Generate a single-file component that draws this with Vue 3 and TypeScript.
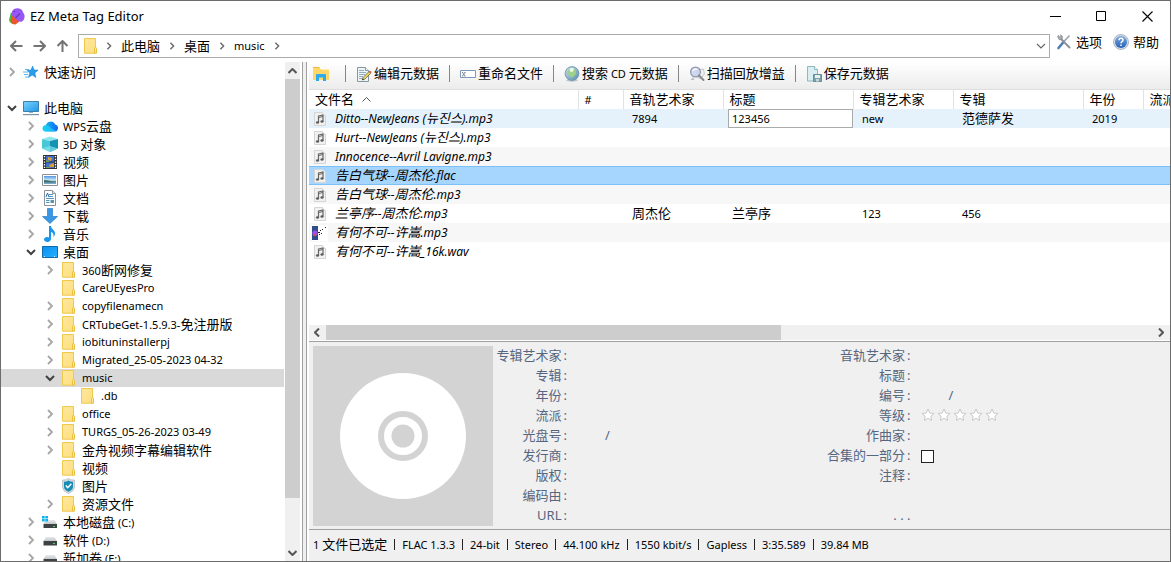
<script setup lang="ts">
import { h, ref } from 'vue'

/* Splits mixed text into CJK and Latin runs, so that each script gets its own size. */
const Txt = (props: { t: string }) => {
  const runs = props.t.match(/[\u3000-\u9fff\uac00-\ud7af]+|[^\u3000-\u9fff\uac00-\ud7af]+/g) ?? []
  return h(
    'span',
    { class: 'txt' },
    runs.map((r) => h('span', { class: /[\u3000-\ud7af]/.test(r) ? 'cjk' : 'latin' }, r)),
  )
}
Txt.props = ['t']

type Node = { name: string; level: number; icon: string; state: 'open' | 'closed' | 'leaf' | 'blank' }
const n = (level: number, icon: string, name: string, state: Node['state'] = 'closed'): Node => ({ name, level, icon, state })

const tree: Node[] = [
  n(0, 'star', '快速访问'),
  n(0, '', '', 'blank'),
  n(0, 'pc', '此电脑', 'open'),
  n(1, 'cloud', 'WPS云盘'),
  n(1, 'cube', '3D 对象'),
  n(1, 'film', '视频'),
  n(1, 'photo', '图片'),
  n(1, 'doc', '文档'),
  n(1, 'down', '下载'),
  n(1, 'note', '音乐'),
  n(1, 'desktop', '桌面', 'open'),
  n(2, 'folder', '360断网修复'),
  n(2, 'folder', 'CareUEyesPro', 'leaf'),
  n(2, 'folder', 'copyfilenamecn'),
  n(2, 'folder', 'CRTubeGet-1.5.9.3-免注册版'),
  n(2, 'folder', 'iobituninstallerpj'),
  n(2, 'folder', 'Migrated_25-05-2023 04-32'),
  n(2, 'folder', 'music', 'open'),
  n(3, 'folder', '.db', 'leaf'),
  n(2, 'folder', 'office'),
  n(2, 'folder', 'TURGS_05-26-2023 03-49'),
  n(2, 'folder', '金舟视频字幕编辑软件'),
  n(2, 'folder', '视频', 'leaf'),
  n(2, 'shield', '图片', 'leaf'),
  n(2, 'folder', '资源文件'),
  n(1, 'cdrive', '本地磁盘 (C:)'),
  n(1, 'drive', '软件 (D:)'),
  n(1, 'drive', '新加卷 (E:)'),
]

const crumbs = ['此电脑', '桌面', 'music']
const tools = [
  { icon: 'edit', label: '编辑元数据' },
  { icon: 'rename', label: '重命名文件' },
  { icon: 'globe', label: '搜索 CD 元数据' },
  { icon: 'scan', label: '扫描回放增益' },
  { icon: 'save', label: '保存元数据' },
]
const columns = ['文件名', '#', '音轨艺术家', '标题', '专辑艺术家', '专辑', '年份', '流派']
const files = [
  { name: 'Ditto--NewJeans (뉴진스).mp3', cells: ['', '7894', '', 'new', '范德萨发', '2019', ''] },
  { name: 'Hurt--NewJeans (뉴진스).mp3', cells: ['', '', '', '', '', '', ''] },
  { name: 'Innocence--Avril Lavigne.mp3', cells: ['', '', '', '', '', '', ''] },
  { name: '告白气球--周杰伦.flac', cells: ['', '', '', '', '', '', ''] },
  { name: '告白气球--周杰伦.mp3', cells: ['', '', '', '', '', '', ''] },
  { name: '兰亭序--周杰伦.mp3', cells: ['', '周杰伦', '兰亭序', '123', '456', '', ''] },
  { name: '有何不可--许嵩.mp3', cells: ['', '', '', '', '', '', ''] },
  { name: '有何不可--许嵩_16k.wav', cells: ['', '', '', '', '', '', ''] },
]
const title = ref('123456')

const fields = [
  { left: '专辑艺术家', lk: 'text', right: '音轨艺术家', rk: 'text' },
  { left: '专辑', lk: 'text', right: '标题', rk: 'text' },
  { left: '年份', lk: 'text', right: '编号', rk: 'pair' },
  { left: '流派', lk: 'text', right: '等级', rk: 'stars' },
  { left: '光盘号', lk: 'pair', right: '作曲家', rk: 'text' },
  { left: '发行商', lk: 'text', right: '合集的一部分', rk: 'check' },
  { left: '版权', lk: 'text', right: '注释', rk: 'text' },
  { left: '编码由', lk: 'text', right: '', rk: '' },
  { left: 'URL', lk: 'url', right: '', rk: '' },
]
const status = ['1 文件已选定', 'FLAC 1.3.3', '24-bit', 'Stereo', '44.100 kHz', '1550 kbit/s', 'Gapless', '3:35.589', '39.84 MB']
</script>

<template>
  <div class="window">
    <svg class="defs" width="0" height="0" aria-hidden="true">
      <defs>
        <linearGradient id="gFolder" x1="0" y1="0" x2="1" y2="1"><stop offset="0" stop-color="#ffe79d" /><stop offset="1" stop-color="#fddf80" /></linearGradient>
        <linearGradient id="gPc" x1="0" y1="0" x2="1" y2="1"><stop offset="0" stop-color="#7fd3ff" /><stop offset="1" stop-color="#1c97e8" /></linearGradient>
        <linearGradient id="gDesk" x1="0" y1="0" x2="1" y2="1"><stop offset="0" stop-color="#0c8ef0" /><stop offset="1" stop-color="#22b2ff" /></linearGradient>
        <linearGradient id="gCloud" x1="0" y1="0" x2="1" y2="0"><stop offset="0" stop-color="#12c8f4" /><stop offset="1" stop-color="#1464f0" /></linearGradient>
        <linearGradient id="gSky" x1="0" y1="0" x2="0" y2="1"><stop offset="0" stop-color="#4f98e0" /><stop offset=".55" stop-color="#d8ecfb" /><stop offset=".6" stop-color="#4d8578" /><stop offset="1" stop-color="#7fa6c8" /></linearGradient>
        <linearGradient id="gHelp" x1="0" y1="0" x2="0" y2="1"><stop offset="0" stop-color="#7ba9e0" /><stop offset="1" stop-color="#2560b8" /></linearGradient>
        <linearGradient id="gGlobe" x1="0" y1="0" x2="1" y2="1"><stop offset="0" stop-color="#c4e2ee" /><stop offset="1" stop-color="#5b8cab" /></linearGradient>
        <linearGradient id="gDrive" x1="0" y1="0" x2="0" y2="1"><stop offset="0" stop-color="#e8e9ea" /><stop offset="1" stop-color="#c3c7ca" /></linearGradient>
        <symbol id="i-folder" viewBox="0 0 16 16"><path d="M1.500.5h11v14.700h-11z" fill="url(#gFolder)" stroke="#efc94c" /><path d="M11.500 10.500q0-1 1-1t1 1v4.700h-2z" fill="#ffe9a6" stroke="#e9bf3f" /></symbol>
        <symbol id="i-star" viewBox="0 0 16 16"><path d="M9.600 2l1.600 4 4 .1-3.300 2.800 1 4.600-3.700-2.400-3.800 2.400 1.300-4.500-2.800-2.700 4-.2z" fill="#2a9dea" stroke="#1583cf" stroke-width=".5" /><path d="M2 5.500h4M0 8h5M1 10.500h4M2 13h3" stroke="#55b6f2" /></symbol>
        <symbol id="i-pc" viewBox="0 0 16 16"><path d="M.5 1.500h15v10H.5z" fill="url(#gPc)" stroke="#3a81ad" /><path d="M6 12h4v1H6z" fill="#8cb5cf" /><path d="M0 14h16v1.200H0z" fill="#7a94a6" /></symbol>
        <symbol id="i-cloud" viewBox="0 0 16 16"><path d="M4 13.500a3 3 0 01-.2-6.200 5 5 0 019.400-.7 3.500 3.500 0 01-.2 6.900z" fill="url(#gCloud)" /><path d="M3 7.500q3-1 5 1.500t6 4l-2 .5H4a3 3 0 01-1-6z" fill="#20d3f6" opacity=".7" /></symbol>
        <symbol id="i-cube" viewBox="0 0 16 16"><path d="M0 3l8-2.500L16 3 8 5z" fill="#8de6ee" /><path d="M0 3l8 2v11l-8-3.500z" fill="#49c7d6" /><path d="M16 3L8 5v11l8-3.500z" fill="#1593b3" /><path d="M0 12.500L8 10l8 2.500L8 16z" fill="#8ce8ef" opacity=".65" /></symbol>
        <symbol id="i-film" viewBox="0 0 16 16"><path d="M1 1h14v14H1z" fill="#303238" /><path d="M4 2h8v5.500H4zM4 8.500h8V14H4z" fill="#416fd0" /><path d="M6 3l4 1-1 3-3-1zM7 11l5-2v4H8z" fill="#d9a13a" /><path d="M4 6l3 1v1H4zM4 13h4v1H4z" fill="#76a04b" /><path d="M2.500 2v13M13.500 2v13" stroke="#fff" stroke-width="1.300" stroke-dasharray="1.300 1.400" /></symbol>
        <symbol id="i-photo" viewBox="0 0 16 16"><path d="M.5 2.500h15v11H.5z" fill="#fff" stroke="#8d9296" /><path d="M2 4h12v8H2z" fill="url(#gSky)" /><path d="M2 8q5 0 12 3v1H2z" fill="#3d746a" /><path d="M2 10.500h12V12H2z" fill="#7aa7cb" /></symbol>
        <symbol id="i-doc" viewBox="0 0 16 16"><path d="M2.500.5h8l3 3v12h-11z" fill="#fff" stroke="#8b9094" /><path d="M10.500.5v3h3" fill="#ddd" stroke="#9a9da0" /><path d="M7 4.500h4M7 6.500h4M4 8.500h8M4 10.500h3.500M4 12.500h3.500" stroke="#4b98c9" /><path d="M4 7l1.500-4L7 7" fill="none" stroke="#2b6fa8" /><path d="M8.500 10h3.500v3H8.500z" fill="#5f94a0" /></symbol>
        <symbol id="i-down" viewBox="0 0 16 16"><path d="M5.500.5h5v8h5L8 15.500.5 8.500h5z" fill="#3a97e6" stroke="#277cc4" stroke-width=".7" /></symbol>
        <symbol id="i-note" viewBox="0 0 16 16"><path d="M7 0h2c0 3 4 4 4 7.500 0 1.500-.6 2.500-1.500 3.500.6-3-.7-4.500-2.500-5v6.500c0 2-1.500 3.500-3.500 3.500S2 15 2 13.500C2 12 3.500 11 5 11q1 0 2 .4z" fill="#1696ee" /></symbol>
        <symbol id="i-desktop" viewBox="0 0 16 16"><path d="M.5 2.500h15v11H.5z" fill="url(#gDesk)" stroke="#0b6cae" /><path d="M2 12.500h2M12 12.500h2" stroke="#d6f0ff" stroke-dasharray="1 1" /></symbol>
        <symbol id="i-shield" viewBox="0 0 16 16"><path d="M7.500.5q-3 2-6 1.500v7q0 4 6 6.500 6-2.500 6-6.500V2q-3 .5-6-1.500z" fill="#d5dadd" stroke="#a8afb4" stroke-width=".6" /><path d="M7.500 2.500q-2 1.300-4.500 1.200v5q0 3 4.500 5 4.500-2 4.500-5v-5q-2.500.1-4.500-1.200z" fill="#168bb5" /><path d="M4.800 7.500l2 2.200 3.500-4" fill="none" stroke="#fff" stroke-width="1.500" /></symbol>
        <symbol id="i-drive" viewBox="0 0 16 16"><path d="M4 5h8.500l2.500 4H1.500z" fill="url(#gDrive)" /><path d="M1.500 9H15v4.500H1.500z" fill="#3d4245" /><path d="M11 11h2v1h-2z" fill="#38e052" /></symbol>
        <symbol id="i-cdrive" viewBox="0 0 16 16"><path d="M4 6h8.500l2.500 4H1.500z" fill="url(#gDrive)" /><path d="M1.500 10H15v4H1.500z" fill="#3d4245" /><path d="M11 12h2v1h-2z" fill="#38e052" /><path d="M0 2h2.700v2.500H0zM3.300 2H6v2.500H3.300zM0 5h2.700v2.500H0zM3.300 5H6v2.500H3.300z" fill="#0db4ec" /></symbol>
        <symbol id="i-edit" viewBox="0 0 16 16"><path d="M1.500 1.500h8l3 3v11h-11z" fill="#eef3f6" stroke="#8798a5" /><path d="M9.500 1.500v3h3" fill="#fff" stroke="#8798a5" /><path d="M3 4.500h5M3 6.500h7M3 8.500h6M3 10.500h4M3 12.500h3" stroke="#91aec3" /><path d="M7 11.500l6-6 1.800 1.700-6 6-2.500.8z" fill="#ead05e" stroke="#555a48" stroke-width=".7" /><path d="M13 5.500l1-1 1.700 1.800-1 1z" fill="#d45b57" /><path d="M6.300 14l.5-1.800 1.300 1.300z" fill="#333" /></symbol>
        <symbol id="i-rename" viewBox="0 0 16 16"><path d="M.5 4.500h15v7H.5z" fill="#fff" stroke="#7c99bd" /><path d="M2.500 6.500l2.500 3.500M5 6.500L2.500 10M2 6.500h1.200M4.300 6.500h1.200M2 10h1.200M4.300 10h1.200" stroke="#60666e" stroke-width=".7" fill="none" /></symbol>
        <symbol id="i-globe" viewBox="0 0 16 16"><ellipse cx="8" cy="14.300" rx="6" ry="1.400" fill="#bbc8cf" /><circle cx="8" cy="7.500" r="6.900" fill="url(#gGlobe)" stroke="#6a90a6" stroke-width=".8" /><path d="M5 3q4-1.500 6 .5l1 3.500-1.500 3-3 1.500L5 9.500 3.500 6.500z" fill="#9fd18c" /><path d="M5.500 3q2-1.500 4.500-.5l-1 3-2.500.5z" fill="#eef9ea" /></symbol>
        <symbol id="i-scan" viewBox="0 0 16 16"><path d="M9 3.500l5.500-.5 1 5-4 5-5-3z" fill="#eceef0" stroke="#b4b9be" stroke-width=".7" /><circle cx="6.500" cy="6" r="4.900" fill="#cbd3ed" fill-opacity=".9" stroke="#9098ae" stroke-width="1.200" /><path d="M3.500 5q2-2.500 5-1.500" stroke="#fff" stroke-width="1.200" fill="none" /><path d="M10 9.500l4.500 4.500" stroke="#85898f" stroke-width="2" stroke-linecap="round" /><path d="M4 11L1.500 14h4z" fill="#b9c0d0" /></symbol>
        <symbol id="i-save" viewBox="0 0 16 16"><path d="M1.500.5h7l3 3v11.500h-10z" fill="#d8eef1" stroke="#8fb8bd" /><path d="M8.500.5v3h3" fill="#f7ffff" stroke="#8fb8bd" /><path d="M7.500 8.500h8v7h-8z" fill="#7ba3aa" stroke="#648e97" /><path d="M9 9h5v3H9z" fill="#e6f0f2" /><path d="M10 13h3v2.500h-3z" fill="#c6d8dc" /></symbol>
        <symbol id="i-explorer" viewBox="0 0 16 16"><path d="M0 1h7v2h9v11H0z" fill="#ffd867" /><path d="M0 1h6v1H0z" fill="#f0b93c" /><path d="M8 3h8v1H8z" fill="#fff1b5" /><path d="M3 9q0-1 1-1h8q1 0 1 1v6h-3v-3.500H6V15H3z" fill="#2daaf0" /></symbol>
        <symbol id="i-mp" viewBox="0 0 16 16"><path d="M2.500 1.500h8l3 3v10h-11z" fill="#f1f1f1" stroke="#d5d5d5" /><path d="M10.500 1.500v3h3" fill="#fff" stroke="#ddd" /><path d="M6.500 5l4.500-1v6.500M6.500 4.500v7" fill="none" stroke="#666" stroke-width="1.200" /><path d="M6.500 6.500l4.500-1" stroke="#666" /><ellipse cx="5.500" cy="11.500" rx="1.600" ry="1.300" fill="#5c5c5c" /><ellipse cx="10" cy="10.500" rx="1.600" ry="1.300" fill="#5c5c5c" /></symbol>
        <symbol id="i-art" viewBox="0 0 16 16"><path d="M0 0h16v16H0z" fill="#fff" /><path d="M0 1h6v14H0z" fill="#304c8c" /><circle cx="3" cy="8" r="2.600" fill="#a24de8" /><path d="M1 9.500h3V11H1z" fill="#e0503a" /><path d="M6 7h2v1H6zM8 5h1v1H8zM9 8h1v1H9zM7 9h1v1H7zM13 2h1v1h-1zM10 4h1v1h-1z" fill="#222" /></symbol>
        <symbol id="i-tools" viewBox="0 0 16 16"><path d="M13.500 1.500L7 8.500" stroke="#9ba4ac" stroke-width="1.600" /><path d="M7.500 8L2.500 14" stroke="#4d7fb5" stroke-width="2.600" stroke-linecap="round" /><path d="M4 4l9.500 9.500" stroke="#8d9296" stroke-width="2" stroke-linecap="round" /><path d="M1.500 2.500l1-1.300 1 2L5 2.500 4.500.8l2 1.500-.3 3-3 .5z" fill="#a6abaf" stroke="#7d8388" stroke-width=".6" /></symbol>
        <symbol id="i-help" viewBox="0 0 16 16"><circle cx="8" cy="8" r="7.500" fill="#d5dae2" stroke="#9aa8bb" stroke-width=".8" /><circle cx="8" cy="8" r="6" fill="url(#gHelp)" /><path d="M6 6.300q0-2 2-2t2 1.700q0 1-1 1.600T8 9.300M8 10.500v1.600" fill="none" stroke="#fff" stroke-width="1.500" /></symbol>
        <symbol id="i-right" viewBox="0 0 10 10"><path d="M3 1l4 4-4 4" fill="none" stroke="currentColor" stroke-width="1.800" /></symbol>
        <symbol id="i-open" viewBox="0 0 10 10"><path d="M1 3l4 4 4-4" fill="none" stroke="currentColor" stroke-width="2" /></symbol>
      </defs>
    </svg>

    <header class="titlebar">
      <svg class="logo" width="16" height="17" viewBox="0 0 16 17">
        <path d="M2 4L0 12q1 4 5 4l3-2z" fill="#35c335" />
        <path d="M3 5L1.500 13q2 4 5 3.500L11 13z" fill="#f0542e" />
        <path d="M5 1q5-2 8 1l2.500 5q.5 5-2.500 6.500-3 1-5.500-2L2.500 7Q2 3 5 1z" fill="#9657f5" />
        <path d="M4.500 3.500H6M6.500 10L11 5.500" stroke="#6a35c0" stroke-width="1.200" />
      </svg>
      <h1>EZ Meta Tag Editor</h1>
      <div class="winbtns">
        <button type="button" aria-label="最小化"><svg width="11" height="11"><path d="M0 5.500h11" stroke="#000" /></svg></button>
        <button type="button" aria-label="最大化"><svg width="11" height="11"><path d="M.5.5h9v9h-9z" fill="none" stroke="#000" /></svg></button>
        <button type="button" aria-label="关闭"><svg width="11" height="11"><path d="M.5.5l10 10M10.500.5l-10 10" stroke="#000" stroke-width="1.100" /></svg></button>
      </div>
    </header>

    <nav class="navbar">
      <div class="arrows">
        <button type="button" aria-label="后退"><svg width="13" height="12" viewBox="0 0 13 12"><path d="M12.500 6H1.500M6 1L1 6l5 5" /></svg></button>
        <button type="button" aria-label="前进"><svg width="13" height="12" viewBox="0 0 13 12"><path d="M.5 6h11M7 1l5 5-5 5" /></svg></button>
        <button type="button" aria-label="向上"><svg width="13" height="12" viewBox="0 0 13 12"><path d="M6.500 12V1.500M1.500 6l5-5 5 5" /></svg></button>
      </div>
      <div class="address">
        <svg width="14" height="16" viewBox="0 0 14 16"><use href="#i-folder" width="16" height="16" /></svg>
        <svg class="sep" width="6" height="8" viewBox="1 0 6 8"><use href="#i-right" width="8" height="8" /></svg>
        <template v-for="c in crumbs" :key="c">
          <button type="button"><Txt :t="c" /></button>
          <svg class="sep" width="6" height="8" viewBox="1 0 6 8"><use href="#i-right" width="8" height="8" /></svg>
        </template>
        <button type="button" class="drop" aria-label="展开"><svg width="10" height="6" viewBox="0 0 10 6"><path d="M1 1l4 4 4-4" fill="none" stroke="#666" stroke-width="1.200" /></svg></button>
      </div>
      <button type="button" class="action"><svg width="16" height="16"><use href="#i-tools" /></svg><Txt t="选项" /></button>
      <button type="button" class="action"><svg width="16" height="16"><use href="#i-help" /></svg><Txt t="帮助" /></button>
    </nav>

    <div class="body">
      <aside class="sidebar">
        <ul class="tree">
          <li v-for="(item, i) in tree" :key="i">
            <button v-if="item.state !== 'blank'" type="button" class="node" :class="['level' + item.level, { selected: item.name === 'music' }]">
              <svg class="twist" :class="item.state" width="10" height="10"><use v-if="item.state !== 'leaf'" :href="item.state === 'open' ? '#i-open' : '#i-right'" /></svg>
              <svg class="icon" width="16" height="16"><use :href="'#i-' + item.icon" /></svg>
              <Txt :t="item.name" />
            </button>
          </li>
        </ul>
        <div class="vscroll">
          <svg width="9" height="6" viewBox="0 0 9 6"><path d="M.5 5l4-4 4 4" /></svg>
          <div class="vtrack"><div class="vthumb"></div></div>
          <svg width="9" height="6" viewBox="0 0 9 6"><path d="M.5 1l4 4 4-4" /></svg>
        </div>
      </aside>
      <div class="splitter"></div>

      <main class="content">
        <div class="toolbar">
          <button type="button" aria-label="打开文件夹"><svg width="16" height="16"><use href="#i-explorer" /></svg></button>
          <template v-for="t in tools" :key="t.icon">
            <i class="bar"></i>
            <button type="button"><svg width="16" height="16"><use :href="'#i-' + t.icon" /></svg><Txt :t="t.label" /></button>
          </template>
        </div>

        <div class="list">
          <table>
            <colgroup><col v-for="(c, i) in columns" :key="c" :class="'c' + i" /></colgroup>
            <thead>
              <tr>
                <th v-for="(c, i) in columns" :key="c" scope="col"><Txt :t="c" /><svg v-if="i === 0" class="sort" width="9" height="5" viewBox="0 0 9 5"><path d="M.5 4.500l4-4 4 4" fill="none" stroke="#555" /></svg></th>
              </tr>
            </thead>
            <tbody>
              <tr v-for="(f, r) in files" :key="f.name" :class="{ hot: r === 0, picked: r === 3 }">
                <td class="name"><div><svg width="16" height="16"><use :href="r === 6 ? '#i-art' : '#i-mp'" /></svg><Txt :t="f.name" /></div></td>
                <td v-for="(c, k) in f.cells" :key="k" :class="{ editing: r === 0 && k === 2 }">
                  <input v-if="r === 0 && k === 2" v-model="title" type="text" aria-label="标题" />
                  <Txt v-else :t="c" />
                </td>
              </tr>
            </tbody>
          </table>
        </div>
        <div class="hscroll">
          <svg width="6" height="9" viewBox="0 0 6 9"><path d="M5 .5l-4 4 4 4" /></svg>
          <div class="htrack"><div class="hthumb"></div></div>
          <svg width="6" height="9" viewBox="0 0 6 9"><path d="M1 .5l4 4-4 4" /></svg>
        </div>

        <section class="details">
          <svg class="cover" width="180" height="180" viewBox="0 0 180 180">
            <path d="M0 0h180v180H0z" fill="#d3d3d3" />
            <circle cx="90" cy="90" r="63" fill="#fff" />
            <circle cx="90" cy="90" r="22" fill="none" stroke="#d3d3d3" stroke-width="6" />
            <circle cx="90" cy="90" r="11.500" fill="#d3d3d3" />
          </svg>
          <form class="form" @submit.prevent>
            <div v-for="(f, i) in fields" :key="i" class="frow">
              <label :for="'l' + i">{{ f.left }}<span class="colon">:</span></label>
              <div class="value" :class="f.lk">
                <input :id="'l' + i" type="text" />
                <template v-if="f.lk === 'pair'"><span>/</span><input type="text" aria-label="光盘总数" /></template>
                <button v-if="f.lk === 'url'" type="button">. . .</button>
              </div>
              <template v-if="f.right">
                <label :for="'r' + i">{{ f.right }}<span class="colon">:</span></label>
                <div class="value" :class="f.rk">
                  <template v-if="f.rk === 'stars'">
                    <button v-for="s in 5" :id="s === 1 ? 'r' + i : undefined" :key="s" type="button" :aria-label="s + ' 星'">
                      <svg width="16" height="16" viewBox="0 0 16 16"><path d="M8 2l1.800 4 4.200.4-3.200 2.900.9 4.200L8 11.300l-3.700 2.200.9-4.200L2 6.400 6.200 6z" fill="#fff" stroke="#c6c9cc" stroke-linejoin="round" /></svg>
                    </button>
                  </template>
                  <input v-else-if="f.rk === 'check'" :id="'r' + i" type="checkbox" />
                  <template v-else>
                    <input :id="'r' + i" type="text" />
                    <template v-if="f.rk === 'pair'"><span>/</span><input type="text" aria-label="总数" /></template>
                  </template>
                </div>
              </template>
            </div>
          </form>
        </section>

        <footer class="status">
          <template v-for="(s, i) in status" :key="s"><i v-if="i"></i><Txt :t="s" /></template>
        </footer>
      </main>
    </div>
  </div>
</template>

<style>
html,
body {
  height: 100%;
  margin: 0;
  overflow: hidden;
}
#app {
  height: 100%;
}
.txt {
  white-space: pre;
}
.txt .cjk {
  font-family: 'Noto Sans CJK SC', 'Noto Sans CJK KR', sans-serif;
  font-size: 13px;
}
</style>

<style scoped>
.window {
  box-sizing: border-box;
  height: 100vh;
  display: flex;
  flex-direction: column;
  border: 1px solid #6c6c6c;
  background: #fff;
  color: #000;
  font: 11px/18px 'Noto Sans', 'Noto Sans CJK SC', sans-serif;
}
.defs {
  position: absolute;
}
svg {
  display: block;
  flex: none;
}
button {
  display: flex;
  align-items: center;
  padding: 0;
  border: 0;
  background: none;
  color: inherit;
  font: inherit;
}
.titlebar {
  display: flex;
  align-items: center;
  height: 30px;
  flex: none;
  padding-left: 8px;
  gap: 5px;
}
h1 {
  flex: 1;
  margin: 0;
  font-size: 13px;
  font-weight: 400;
}
.winbtns {
  display: flex;
}
.winbtns button {
  width: 46px;
  height: 28px;
  justify-content: center;
}
.navbar {
  display: flex;
  align-items: center;
  flex: none;
  height: 30px;
  padding: 0 11px 1px 0;
}
.arrows {
  display: flex;
  gap: 10px;
  padding: 0 9px;
}
.arrows path {
  fill: none;
  stroke: #737373;
  stroke-width: 2;
}
.address {
  display: flex;
  align-items: center;
  flex: 1;
  box-sizing: border-box;
  height: 24px;
  padding: 0 3px 0 4px;
  margin-right: 6px;
  border: 1px solid #a9a9ae;
  gap: 9px;
}
.address .sep {
  color: #6a6a6a;
}
.address .drop {
  margin-left: auto;
}
.action {
  height: 22px;
  margin-bottom: 8px;
  gap: 4px;
}
.action + .action {
  margin-left: 11px;
}
.body {
  display: flex;
  flex: 1;
  min-height: 0;
}
.sidebar {
  display: flex;
  width: 301px;
  flex: none;
}
.tree {
  flex: 1;
  min-width: 0;
  margin: 0;
  padding: 1px 0 0;
  overflow: hidden;
  list-style: none;
}
.tree li {
  height: 18px;
}
.node {
  width: 100%;
  height: 18px;
  gap: 5px;
}
.node.selected {
  background: #d9d9d9;
}
.level0 {
  padding-left: 6px;
}
.level1 {
  padding-left: 25px;
}
.level2 {
  padding-left: 44px;
}
.level3 {
  padding-left: 63px;
}
.twist {
  margin-right: 1px;
  color: #a6a6a6;
}
.twist.open {
  color: #404040;
}
.vscroll,
.hscroll {
  display: flex;
  align-items: center;
  background: #f0f0f0;
}
.vscroll {
  flex-direction: column;
  width: 15px;
  margin: 0 2px 0 1px;
}
.vscroll > svg {
  margin: 6px 0 5px;
}
.vscroll path,
.hscroll path {
  fill: none;
  stroke: #555;
  stroke-width: 2;
}
.vtrack {
  flex: 1;
  width: 100%;
}
.vthumb {
  height: 90%;
  background: #cdcdcd;
}
.splitter {
  width: 3px;
  flex: none;
  margin-right: 2px;
  border: solid #a0a0a0;
  border-width: 0 1px;
  background: #f0f0f0;
}
.content {
  flex: 1;
  min-width: 0;
  display: flex;
  flex-direction: column;
}
.toolbar {
  display: flex;
  align-items: center;
  flex: none;
  height: 23px;
  padding: 0 4px 4px;
  border-bottom: 1px solid #dedede;
  background: linear-gradient(#fff, #ececec);
}
.toolbar button {
  gap: 2px;
}
.toolbar .bar {
  width: 1px;
  height: 17px;
  margin: 0 10px;
  background: #858585;
}
.toolbar button:first-child {
  margin-right: 6px;
}
.list {
  flex: 1;
  overflow: hidden;
}
table {
  width: 934px;
  table-layout: fixed;
  border-collapse: collapse;
}
.c0 {
  width: 269px;
}
.c1 {
  width: 45px;
}
.c2,
.c4 {
  width: 100px;
}
.c3,
.c5 {
  width: 130px;
}
.c6 {
  width: 60px;
}
.c7 {
  width: 100px;
}
th,
td {
  height: 19px;
  padding: 0 0 0 9px;
  font-weight: 400;
  line-height: 18px;
  text-align: left;
  white-space: nowrap;
  overflow: hidden;
}
th {
  padding-left: 6px;
  border-right: 1px solid #e2e2e2;
}
.sort {
  display: inline-block;
  margin: 0 0 2px 8px;
}
tbody tr:nth-child(odd) {
  background: #f7f7f7;
}
tbody tr.hot {
  background: #e5f1fb;
}
tbody tr.picked {
  background: #a6d5fd;
  box-shadow: inset 0 1px #7cc0f8, inset 0 -1px #7cc0f8;
}
td.name {
  padding-left: 3px;
  font-size: 12px;
  font-style: italic;
}
td.name div {
  display: flex;
  align-items: center;
  height: 19px;
  gap: 7px;
}
td.editing {
  padding: 0 0 0 5px;
}
td input {
  display: block;
  box-sizing: border-box;
  width: 100%;
  height: 19px;
  padding: 0 3px;
  border: 1px solid #aaa;
  background: #fff;
  font: inherit;
}
.hscroll {
  flex: none;
  height: 15px;
  margin-bottom: 1px;
}
.hscroll > svg {
  margin: 0 6px 0 5px;
}
.htrack {
  flex: 1;
  height: 100%;
}
.hthumb {
  width: 55%;
  height: 100%;
  background: #cdcdcd;
}
.details {
  display: flex;
  flex: none;
  padding: 4px 0 3px 4px;
  border-top: 1px solid #a0a0a0;
  background: #f0f0f0;
  color: #566680;
}
.form {
  flex: 1;
  min-width: 0;
}
.frow {
  display: grid;
  grid-template-columns: 74px 1fr 84px 1fr;
  align-items: start;
  height: 20px;
}
.frow label {
  font-size: 13px;
  text-align: right;
  white-space: nowrap;
}
.colon {
  margin-left: 2px;
}
.value {
  display: flex;
  align-items: center;
  min-width: 0;
  height: 18px;
  font-size: 13px;
}
.value input {
  min-width: 0;
  width: 100%;
  padding: 0;
  border: 0;
  background: none;
  font: inherit;
}
.value.pair input {
  width: 38px;
}
.value.url {
  grid-column: 2 / 4;
}
.value.url button {
  flex: none;
}
.value.stars {
  padding-left: 9px;
}
.value.check {
  padding-left: 10px;
  height: 20px;
}
.value.check input {
  appearance: none;
  box-sizing: border-box;
  width: 13px;
  height: 13px;
  margin: 0;
  border: 1px solid #222;
  background: #fff;
}
.status {
  display: flex;
  align-items: center;
  flex: none;
  height: 29px;
  padding: 0 0 2px 4px;
  border-top: 1px solid #a0a0a0;
  background: #f0f0f0;
}
.status i {
  width: 1px;
  height: 11px;
  margin: 0 7px;
  background: #222;
}
</style>
